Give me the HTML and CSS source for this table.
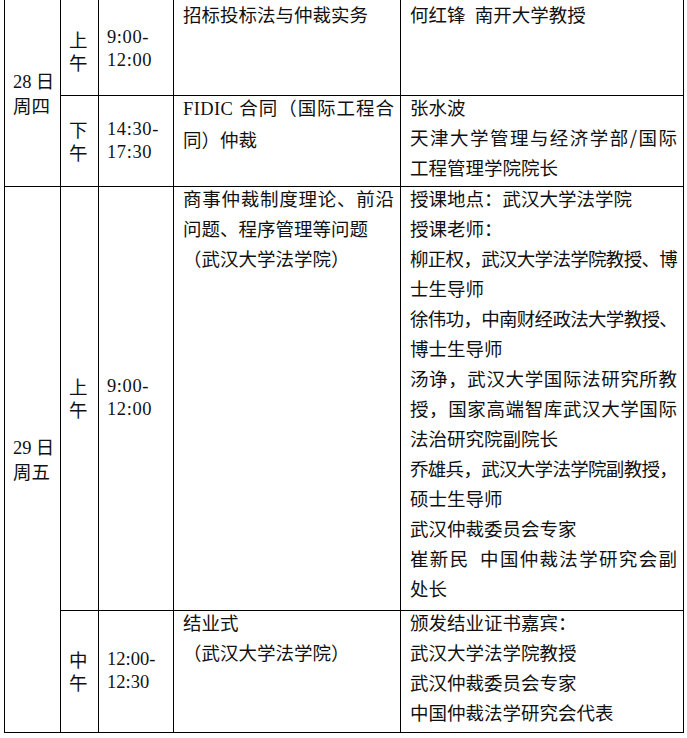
FILE: index.html
```html
<!DOCTYPE html>
<html lang="zh-CN">
<head>
<meta charset="utf-8">
<title>日程</title>
<link rel="stylesheet" href="styles.css">
</head>
<body>
<table class="sched">
  <colgroup>
    <col class="c-day"><col class="c-half"><col class="c-time"><col class="c-topic"><col class="c-who">
  </colgroup>
  <tr class="r1">
    <td class="day first" rowspan="2"><span class="num">28</span> 日<br>周四</td>
    <td class="half first">上<br>午</td>
    <td class="time first">9:00-<br>12:00</td>
    <td class="txt first"><div class="in">招标投标法与仲裁实务</div></td>
    <td class="txt first"><div class="in">何红锋&#8194;南开大学教授</div></td>
  </tr>
  <tr class="r2">
    <td class="half">下<br>午</td>
    <td class="time">14:30-<br>17:30</td>
    <td class="txt"><div class="in"><span class="j"><span class="latin">FIDIC </span>合同（国际工程合</span>同）仲裁</div></td>
    <td class="txt"><div class="in">张水波<br><span class="j">天津大学管理与经济学部/国际</span>工程管理学院院长</div></td>
  </tr>
  <tr class="r3">
    <td class="day" rowspan="2"><span class="num">29</span> 日<br>周五</td>
    <td class="half">上<br>午</td>
    <td class="time">9:00-<br>12:00</td>
    <td class="txt"><div class="in"><span class="j">商事仲裁制度理论、前沿</span>问题、程序管理等问题<br>（武汉大学法学院）</div></td>
    <td class="txt"><div class="in">授课地点：武汉大学法学院<br>授课老师：<br><span class="j tight">柳正权，武汉大学法学院教授、博</span>士生导师<br><span class="j tight">徐伟功，中南财经政法大学教授、</span>博士生导师<br><span class="j">汤诤，武汉大学国际法研究所教</span><span class="j">授，国家高端智库武汉大学国际</span>法治研究院副院长<br><span class="j tight">乔雄兵，武汉大学法学院副教授，</span>硕士生导师<br>武汉仲裁委员会专家<br><span class="j">崔新民&#8194;中国仲裁法学研究会副</span>处长</div></td>
  </tr>
  <tr class="r4">
    <td class="half">中<br>午</td>
    <td class="time plain">12:00-<br>12:30</td>
    <td class="txt"><div class="in">结业式<br>（武汉大学法学院）</div></td>
    <td class="txt"><div class="in">颁发结业证书嘉宾：<br>武汉大学法学院教授<br>武汉仲裁委员会专家<br>中国仲裁法学研究会代表</div></td>
  </tr>
</table>
</body>
</html>
```
FILE: styles.css
```css
html, body {
  margin: 0;
  padding: 0;
  background: #fff;
}
body {
  font-family: "Noto Sans CJK SC", sans-serif;
  color: #111;
  font-size: 18.5px;
}
.sched {
  border-collapse: collapse;
  table-layout: fixed;
  width: 679px;
  margin-left: 4px;
}
.c-day { width: 56px; }
.c-half { width: 38px; }
.c-time { width: 75px; }
.c-topic { width: 227px; }
.c-who { width: 283px; }
.sched td {
  border: 1.5px solid #000;
  padding: 0 5px 0 8px;
  vertical-align: middle;
  line-height: 23px;
  overflow: visible;
}
.sched td.first { border-top: none; }
.sched td.half.first { padding-top: 7px; }
.sched td.time.first { padding-top: 3px; }
.r1 { height: 95px; }
.r2 { height: 91px; }
.r3 { height: 424px; }
.r4 { height: 122px; }
.num {
  font-family: "Liberation Serif", serif;
  font-size: 18.5px;
}
.time {
  font-family: "Liberation Serif", serif;
  font-size: 18.5px;
  letter-spacing: 0.6px;
}
.time.plain {
  letter-spacing: 0;
}
.sched td.txt {
  vertical-align: top;
  padding-left: 9px;
  padding-right: 6px;
  line-height: 30px;
}
.in {
  margin-top: -4px;
  white-space: nowrap;
}
.first .in { margin-top: -1px; }
.j {
  display: block;
  text-align: justify;
  text-align-last: justify;
}
.tight { letter-spacing: -0.75px; }
.latin {
  font-family: "Liberation Serif", serif;
  font-size: 18.5px;
  letter-spacing: 0.4px;
  white-space: pre;
}
```
